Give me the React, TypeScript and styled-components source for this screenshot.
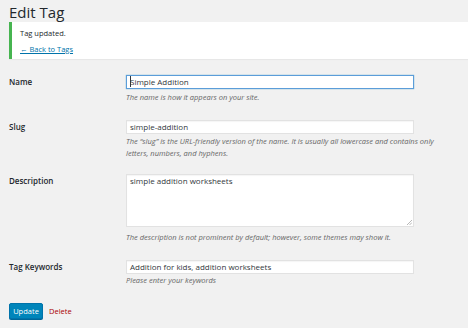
import React from "react";
import styled, { createGlobalStyle } from "styled-components";

const Global = createGlobalStyle`
  html, body { margin: 0; padding: 0; background: #f1f1f1; }
  body { font-family: "Open Sans", "Noto Sans", sans-serif; color: #23282d; font-size: 8px; }
  * { box-sizing: border-box; }
`;

const Page = styled.div`
  width: 468px;
  height: 328px;
  overflow: hidden;
  padding-left: 9px;
`;

const Title = styled.h1`
  margin: 0;
  font-size: 15px;
  font-weight: 400;
  line-height: 22px;
  height: 22px;
  padding-top: 1px;
  color: #23282d;
`;

const Notice = styled.div`
  background: #fff;
  border-left: 3px solid #46b450;
  box-shadow: 0 1px 1px rgba(0, 0, 0, 0.04);
  height: 37px;
  padding: 5px 0 4px 8px;
  display: flex;
  flex-direction: column;
  gap: 4px;
`;

const NoticeText = styled.p`
  margin: 0;
  line-height: 12px;
  font-size: 7.5px;
  color: #23282d;
`;

const BackLink = styled.a`
  line-height: 12px;
  font-size: 7.5px;
  color: #0073aa;
  text-decoration: underline;
`;

const Form = styled.div`
  margin-top: 16px;
  display: flex;
  flex-direction: column;
`;

const Row = styled.div<{ $gap: number }>`
  display: grid;
  grid-template-columns: 117px 288px;
  margin-bottom: ${(p) => p.$gap}px;
`;

const Label = styled.label`
  font-weight: 600;
  font-size: 8px;
  line-height: 14px;
  color: #23282d;
`;

const Field = styled.div`
  display: flex;
  flex-direction: column;
`;

const Input = styled.div<{ $focus?: boolean }>`
  height: 14px;
  background: #fff;
  border: 1px solid ${(p) => (p.$focus ? "#5b9dd9" : "#e2e2e2")};
  box-shadow: ${(p) =>
    p.$focus ? "0 0 1px rgba(30,140,190,0.8)" : "inset 0 1px 1px rgba(0,0,0,0.04)"};
  font-size: 8px;
  line-height: 12px;
  padding: 0 3px;
  color: #32373c;
  white-space: nowrap;
`;

const TextArea = styled.div`
  height: 53px;
  background: #fff;
  border: 1px solid #e2e2e2;
  box-shadow: inset 0 1px 1px rgba(0, 0, 0, 0.04);
  font-size: 8px;
  line-height: 12px;
  padding: 0 3px;
  color: #32373c;
  position: relative;
`;

const Grip = styled.svg`
  position: absolute;
  right: 1px;
  bottom: 1px;
`;

const Caret = styled.span`
  border-left: 1px solid #32373c;
  margin-right: -1px;
`;

const Hint = styled.p<{ $mt?: number }>`
  margin: ${(p) => p.$mt ?? 2}px 0 0;
  font-style: italic;
  font-size: 7.5px;
  line-height: 12px;
  color: #666;
  width: 310px;
`;

const Actions = styled.div`
  margin-top: 17px;
  display: flex;
  align-items: center;
  gap: 6px;
`;

const Button = styled.button`
  height: 16px;
  width: 34px;
  padding: 0;
  background: #0085ba;
  border: 1px solid #0073aa;
  border-radius: 2px;
  box-shadow: 0 1px 0 #006799;
  color: #fff;
  font-family: inherit;
  font-size: 7.5px;
  line-height: 14px;
`;

const DeleteLink = styled.a`
  color: #a00;
  font-size: 7.5px;
  text-decoration: none;
`;

export default function App() {
  return (
    <Page>
      <Global />
      <Title>Edit Tag</Title>
      <Notice>
        <NoticeText>Tag updated.</NoticeText>
        <BackLink href="#">← Back to Tags</BackLink>
      </Notice>
      <Form>
        <Row $gap={17}>
          <Label>Name</Label>
          <Field>
            <Input $focus>
              <Caret />Simple Addition
            </Input>
            <Hint>The name is how it appears on your site.</Hint>
          </Field>
        </Row>
        <Row $gap={15}>
          <Label>Slug</Label>
          <Field>
            <Input>simple-addition</Input>
            <Hint $mt={1}>
              The “slug” is the URL-friendly version of the name. It is usually all lowercase and
              contains only letters, numbers, and hyphens.
            </Hint>
          </Field>
        </Row>
        <Row $gap={17}>
          <Label>Description</Label>
          <Field>
            <TextArea>
              simple addition worksheets
              <Grip width="5" height="5" viewBox="0 0 5 5">
                <path d="M5 0 L0 5 M5 2.5 L2.5 5" stroke="#999" strokeWidth="0.7" />
              </Grip>
            </TextArea>
            <Hint $mt={4}>
              The description is not prominent by default; however, some themes may show it.
            </Hint>
          </Field>
        </Row>
        <Row $gap={0}>
          <Label>Tag Keywords</Label>
          <Field>
            <Input>Addition for kids, addition worksheets</Input>
            <Hint $mt={0}>Please enter your keywords</Hint>
          </Field>
        </Row>
      </Form>
      <Actions>
        <Button>Update</Button>
        <DeleteLink href="#">Delete</DeleteLink>
      </Actions>
    </Page>
  );
}
